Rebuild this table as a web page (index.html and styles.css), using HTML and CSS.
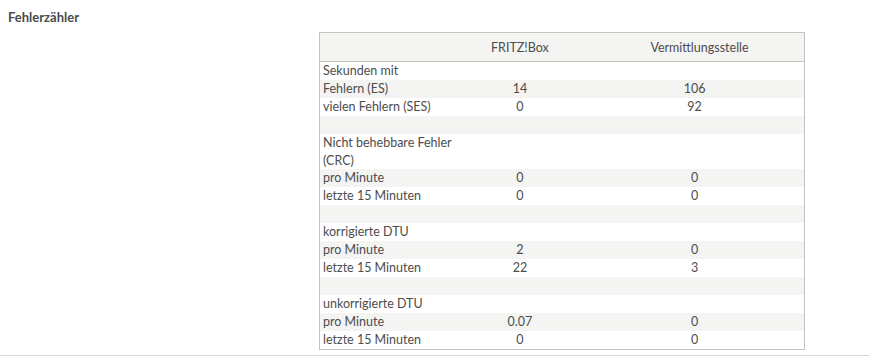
FILE: index.html
```html
<!DOCTYPE html>
<html lang="de">
<head>
<meta charset="utf-8">
<title>Fehlerzähler</title>
<link rel="stylesheet" href="styles.css">
</head>
<body>
<section class="section">
  <h2 class="title">Fehlerzähler</h2>
  <div class="layout">
    <div class="spacer"></div>
    <table class="stats">
      <colgroup>
        <col class="c-label">
        <col class="c-fritz">
        <col class="c-vst">
      </colgroup>
      <thead>
        <tr>
          <th></th>
          <th>FRITZ!Box</th>
          <th class="th-vst">Vermittlungsstelle</th>
        </tr>
      </thead>
      <tbody>
        <tr><td>Sekunden mit</td><td></td><td></td></tr>
        <tr class="alt"><td>Fehlern (ES)</td><td>14</td><td>106</td></tr>
        <tr><td>vielen Fehlern (SES)</td><td>0</td><td>92</td></tr>
        <tr class="alt"><td>&nbsp;</td><td></td><td></td></tr>
        <tr><td>Nicht behebbare Fehler (CRC)</td><td></td><td></td></tr>
        <tr class="alt"><td>pro Minute</td><td>0</td><td>0</td></tr>
        <tr><td>letzte 15 Minuten</td><td>0</td><td>0</td></tr>
        <tr class="alt"><td>&nbsp;</td><td></td><td></td></tr>
        <tr><td>korrigierte DTU</td><td></td><td></td></tr>
        <tr class="alt"><td>pro Minute</td><td>2</td><td>0</td></tr>
        <tr><td>letzte 15 Minuten</td><td>22</td><td>3</td></tr>
        <tr class="alt"><td>&nbsp;</td><td></td><td></td></tr>
        <tr><td>unkorrigierte DTU</td><td></td><td></td></tr>
        <tr class="alt"><td>pro Minute</td><td>0.07</td><td>0</td></tr>
        <tr><td>letzte 15 Minuten</td><td>0</td><td>0</td></tr>
      </tbody>
    </table>
  </div>
</section>
</body>
</html>
```

FILE: styles.css
```css
html, body {
  margin: 0;
  padding: 0;
  background: #ffffff;
}

body {
  font-family: Lato, "Open Sans", "Liberation Sans", sans-serif;
  color: #4d4d4d;
  font-size: 12.5px;
}

.section {
  padding: 9px 0 5px 0;
  border-bottom: 1px solid #d6d6d6;
  width: 869px;
  box-sizing: border-box;
}

.title {
  margin: 0 0 0 8px;
  font-size: 13px;
  font-weight: bold;
  line-height: 16px;
  color: #4a4a4a;
}

.layout {
  display: flex;
  margin-top: 7px;
}

.spacer {
  width: 319px;
  flex: none;
}

.stats {
  border-collapse: collapse;
  border: 1px solid #c4c4bc;
  width: 486px;
  table-layout: fixed;
}

.c-label { width: 135px; }
.c-fritz { width: 130px; }
.c-vst { width: 219px; }

.stats thead tr {
  background: #f4f4f2;
  border-bottom: 1px solid #c4c4bc;
}

.stats th {
  font-weight: normal;
  height: 28px;
  padding: 0;
  text-align: center;
  vertical-align: middle;
  font-size: 12.5px;
}

.stats th.th-vst {
  padding-left: 10px;
}

.stats td {
  padding: 0 3px;
  line-height: 17.9px;
  height: 17.9px;
  vertical-align: top;
  text-align: center;
}

.stats td:first-child {
  text-align: left;
}

.stats tr.alt td {
  background: #f4f4f2;
}
```
